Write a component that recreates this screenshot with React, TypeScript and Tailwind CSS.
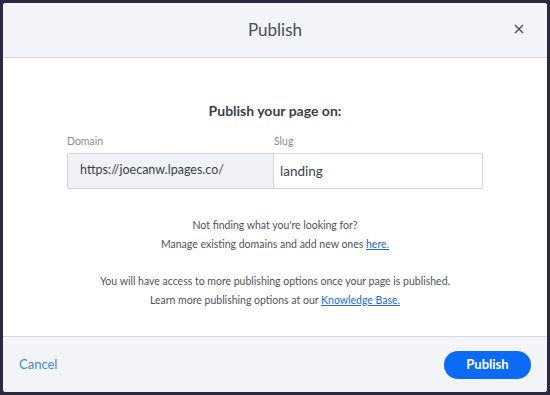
import React from "react";

function PublishModal() {
  return (
    <div className="flex h-full w-full flex-col overflow-hidden rounded-[3px] bg-white">
      <div className="relative flex h-[55px] shrink-0 items-center justify-center border-b border-[#d5d8de] bg-[#f3f4f7]">
        <span className="text-[17px] text-[#4a4d55]">Publish</span>
        <button className="absolute right-[21px] top-[19px] flex h-[14px] w-[14px] items-center justify-center text-[#555]">
          <svg width="10" height="10" viewBox="0 0 10 10">
            <path d="M1 1L9 9M9 1L1 9" stroke="currentColor" strokeWidth="1.5" />
          </svg>
        </button>
      </div>

      <div className="flex flex-1 flex-col items-center pt-[42px]">
        <p className="text-[14px] font-bold text-[#3b3f48]">Publish your page on:</p>

        <div className="mt-[13px] flex w-[416px]">
          <div className="w-[207px]">
            <p className="mb-[3px] text-[10.5px] text-[#8a8d93]">Domain</p>
            <div className="flex h-[36px] items-center rounded-l-[2px] border border-[#d2d5db] bg-[#f1f2f6] pl-[12px] text-[12.5px] text-[#3b3f48]">
              https://joecanw.lpages.co/
            </div>
          </div>
          <div className="flex-1">
            <p className="mb-[3px] text-[10.5px] text-[#8a8d93]">Slug</p>
            <div className="flex h-[36px] items-center rounded-r-[2px] border border-l-0 border-[#d2d5db] bg-white pl-[6px] text-[13.5px] text-[#3b3f48]">
              landing
            </div>
          </div>
        </div>

        <div className="mt-[27px] text-center text-[10.5px] leading-[19px] text-[#4f535b]">
          <p>Not finding what you're looking for?</p>
          <p>
            Manage existing domains and add new ones{" "}
            <a className="text-[#1a6ae6] underline">here.</a>
          </p>
        </div>

        <div className="mt-[18px] text-center text-[10.5px] leading-[19px] text-[#4f535b]">
          <p>You will have access to more publishing options once your page is published.</p>
          <p>
            Learn more publishing options at our{" "}
            <a className="text-[#1a6ae6] underline">Knowledge Base.</a>
          </p>
        </div>
      </div>

      <div className="flex h-[56px] shrink-0 items-center justify-between border-t border-[#d5d8de] bg-[#f3f4f7] pl-[16px] pr-[16px]">
        <button className="text-[13px] text-[#3d86ef]">Cancel</button>
        <button className="h-[28px] w-[87px] rounded-full bg-[#0b6bf5] text-[13px] font-bold text-white">
          Publish
        </button>
      </div>
    </div>
  );
}

export default function App() {
  return (
    <div
      className="h-[395px] w-[550px] bg-[#2b2a42] p-[3px]"
      style={{ fontFamily: "Lato, 'Noto Sans', sans-serif" }}
    >
      <PublishModal />
    </div>
  );
}
